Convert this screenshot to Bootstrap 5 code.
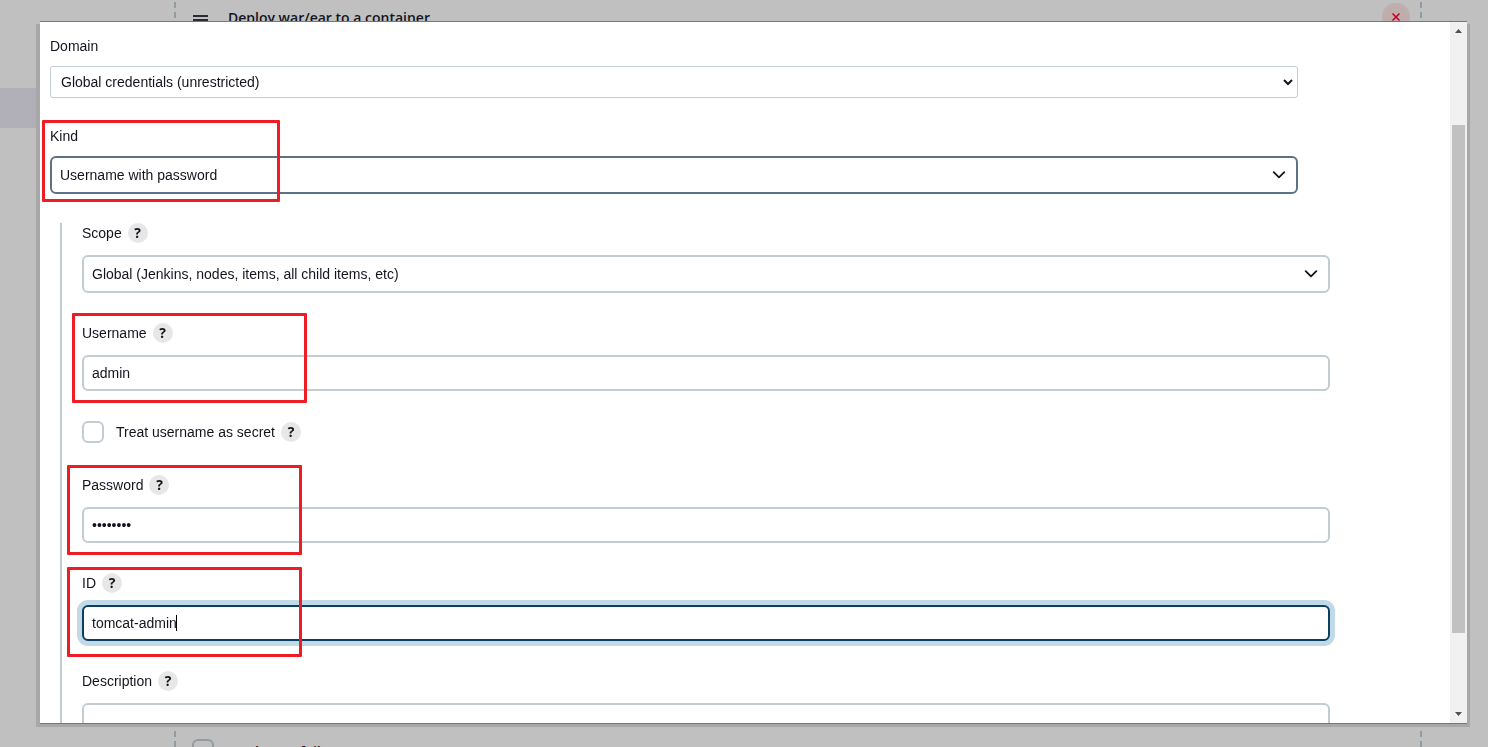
<!DOCTYPE html>
<html lang="en">
<head>
<meta charset="utf-8">
<meta name="viewport" content="width=device-width, initial-scale=1">
<title>Add Credentials</title>
<link rel="stylesheet" href="https://cdn.jsdelivr.net/npm/bootstrap@5.3.0/dist/css/bootstrap.min.css">
<style>
  :root { --line: #c3ccd1; --ink: #14141f; }
  body { font-family: "Liberation Sans", Arial, sans-serif; font-size: 14px; line-height: 20px; color: var(--ink); background: #c0c0c0; }

  /* Dimmed job configuration page */
  .page-side { width: 174px; padding-top: 88px; }
  .side-item { height: 40px; background: #b1b0b8; }
  .step-box { margin: -8px 66px -20px 0; border: 2px dashed #929b9f; font-family: "Open Sans", sans-serif; }
  .step-head { padding: 9px 10px 0 16px; height: 46px; }
  .step-title { font-size: 14px; line-height: 30px; font-weight: 600; margin-left: 18px; }
  .step-remove { width: 28px; height: 28px; background: #c0adad; border: 0; }
  .step-foot { padding: 0 0 3px 16px; }
  .step-foot label { margin-left: 14px; padding-top: 4px; font-weight: 600; }
  .step-foot .form-check-input { background-color: #c0c0c0; border-color: #929b9f; }

  /* Dialog */
  .cred-dialog { position: fixed; inset: 21px 21px 23px 40px; background: #fff; border: solid #777; border-width: 1px 0; box-shadow: -4px 3px 0 #a8a8a8, 3px 3px 0 #a8a8a8; }
  .cred-body { padding: 14px 152px 0 10px; }
  .outer-field { margin-bottom: 28px; }
  .field { margin-bottom: 30px; }
  .form-label { display: flex; align-items: center; margin-bottom: 12px; min-height: 20px; }
  .outer-field .form-label { margin-bottom: 10px; }
  .nested { margin: 29px -32px 0 10px; padding-left: 20px; border-left: 2px solid var(--line); }
  .form-control, .form-select { font-size: 14px; line-height: 20px; color: var(--ink); border: 2px solid var(--line); border-radius: 6px; padding: 6px 8px; height: 36px; }
  .form-select { height: 38px; background-image: none; }
  .select-slim { height: 32px; border-width: 1px; border-radius: 3px; padding: 5px 10px; }
  .select-active { border-color: #5b7384; }
  .control-focus { border-color: #0b3f61; box-shadow: 0 0 0 5px #c2d9e6; }
  textarea.form-control { height: 90px; resize: none; }
  .chevron { position: absolute; right: 12px; top: 12px; pointer-events: none; }
  .chevron-slim { right: 4px; top: 9px; }
  .text-caret { position: absolute; left: 94px; top: 10px; width: 1px; height: 16px; background: #000; }
  .form-check-input { width: 22px; height: 22px; border: 2px solid var(--line); border-radius: 6px !important; margin: 0; }
  .check-row { margin-bottom: 32px; }
  .help-btn { width: 20px; height: 20px; border: 0; padding: 0; margin-left: 6px; border-radius: 50%; background: #e7e7e7; color: var(--ink); font-family: "Open Sans", sans-serif; font-weight: 700; font-size: 14px; line-height: 20px; text-align: center; }

  /* Red call-outs drawn over the form */
  .callout::after { content: ""; position: absolute; left: -15px; top: -10px; width: 235px; height: 90px; border: 3px solid #ee1c25; border-radius: 1px; pointer-events: none; }
  .callout-kind::after { left: -8px; top: -6px; width: 238px; height: 82px; }
  .callout-user::after { left: -10px; }
  .callout-id::after { top: -6px; }

  /* Scroll bar */
  .scroll-rail { width: 17px; background: #f1f1f1; }
  .scroll-end { height: 17px; }
  .rail-before { flex: 86 0 0; }
  .rail-thumb { flex: 508 0 0; margin: 0 2px; background: #c1c1c1; }
  .rail-after { flex: 73 0 0; }
</style>
</head>
<body class="vh-100 overflow-hidden">
<div class="d-flex vh-100 overflow-hidden">
  <nav class="page-side flex-shrink-0"><div class="side-item"></div></nav>
  <section class="step-box flex-grow-1 d-flex flex-column justify-content-between">
    <div class="step-head d-flex align-items-start">
      <svg width="18" height="30" viewBox="0 0 18 30" stroke="#2a2a33" stroke-width="2"><path d="M1 13h15M1 17h15M1 21h15"/></svg>
      <span class="step-title">Deploy war/ear to a container</span>
      <button class="step-remove rounded-circle ms-auto p-0 d-flex align-items-center justify-content-center" type="button" aria-label="Remove">
        <svg width="10" height="10" viewBox="0 0 10 10" stroke="#c00020" stroke-width="1.5"><path d="M1.500 1.500l7 7M8.500 1.500l-7 7"/></svg>
      </button>
    </div>
    <div class="step-foot d-flex align-items-center">
      <input class="form-check-input" type="checkbox" id="onFailure">
      <label for="onFailure">Deploy on failure</label>
    </div>
  </section>
</div>

<main class="cred-dialog d-flex" role="dialog" aria-label="Add Credentials">
  <form class="cred-body flex-grow-1 overflow-hidden">
    <div class="outer-field">
      <label class="form-label" for="domain">Domain</label>
      <div class="position-relative">
        <select class="form-select select-slim" id="domain"><option>Global credentials (unrestricted)</option></select>
        <svg class="chevron chevron-slim" width="12" height="14" viewBox="0 0 12 14" fill="none" stroke="#14141f" stroke-width="2"><path d="M2 5l4 4 4-4"/></svg>
      </div>
    </div>
    <div class="outer-field callout callout-kind position-relative">
      <label class="form-label" for="kind">Kind</label>
      <div class="position-relative">
        <select class="form-select select-active" id="kind"><option>Username with password</option></select>
        <svg class="chevron" width="14" height="14" viewBox="0 0 14 14" fill="none" stroke="#14141f" stroke-width="1.8" stroke-linecap="round" stroke-linejoin="round"><path d="M1.700 4.200L7 9.400l5.300-5.200"/></svg>
      </div>
    </div>

    <div class="nested">
      <div class="field">
        <div class="form-label"><label for="scope">Scope</label><button class="help-btn" type="button">?</button></div>
        <div class="position-relative">
          <select class="form-select" id="scope"><option>Global (Jenkins, nodes, items, all child items, etc)</option></select>
          <svg class="chevron" width="14" height="14" viewBox="0 0 14 14" fill="none" stroke="#14141f" stroke-width="1.8" stroke-linecap="round" stroke-linejoin="round"><path d="M1.700 4.200L7 9.400l5.300-5.200"/></svg>
        </div>
      </div>
      <div class="field callout callout-user position-relative">
        <div class="form-label"><label for="username">Username</label><button class="help-btn" type="button">?</button></div>
        <input class="form-control" id="username" type="text" value="admin">
      </div>
      <div class="check-row d-flex align-items-center">
        <input class="form-check-input" type="checkbox" id="secret">
        <label class="ms-2 ps-1" for="secret">Treat username as secret</label><button class="help-btn" type="button">?</button>
      </div>
      <div class="field callout position-relative">
        <div class="form-label"><label for="password">Password</label><button class="help-btn" type="button">?</button></div>
        <input class="form-control" id="password" type="password" value="password">
      </div>
      <div class="field callout callout-id position-relative">
        <div class="form-label"><label for="credId">ID</label><button class="help-btn" type="button">?</button></div>
        <div class="position-relative">
          <input class="form-control control-focus" id="credId" type="text" value="tomcat-admin">
          <span class="text-caret"></span>
        </div>
      </div>
      <div class="field">
        <div class="form-label"><label for="description">Description</label><button class="help-btn" type="button">?</button></div>
        <textarea class="form-control" id="description"></textarea>
      </div>
    </div>
  </form>
  <div class="scroll-rail d-flex flex-column flex-shrink-0" aria-hidden="true">
    <svg class="scroll-end" width="17" viewBox="0 0 17 17" fill="#505050"><path d="M5 11h7L8.500 7z"/></svg>
    <div class="rail-before"></div>
    <div class="rail-thumb"></div>
    <div class="rail-after"></div>
    <svg class="scroll-end" width="17" viewBox="0 0 17 17" fill="#505050"><path d="M5 6h7l-3.500 4z"/></svg>
  </div>
</main>
<script src="https://cdn.jsdelivr.net/npm/bootstrap@5.3.0/dist/js/bootstrap.bundle.min.js"></script>
</body>
</html>
